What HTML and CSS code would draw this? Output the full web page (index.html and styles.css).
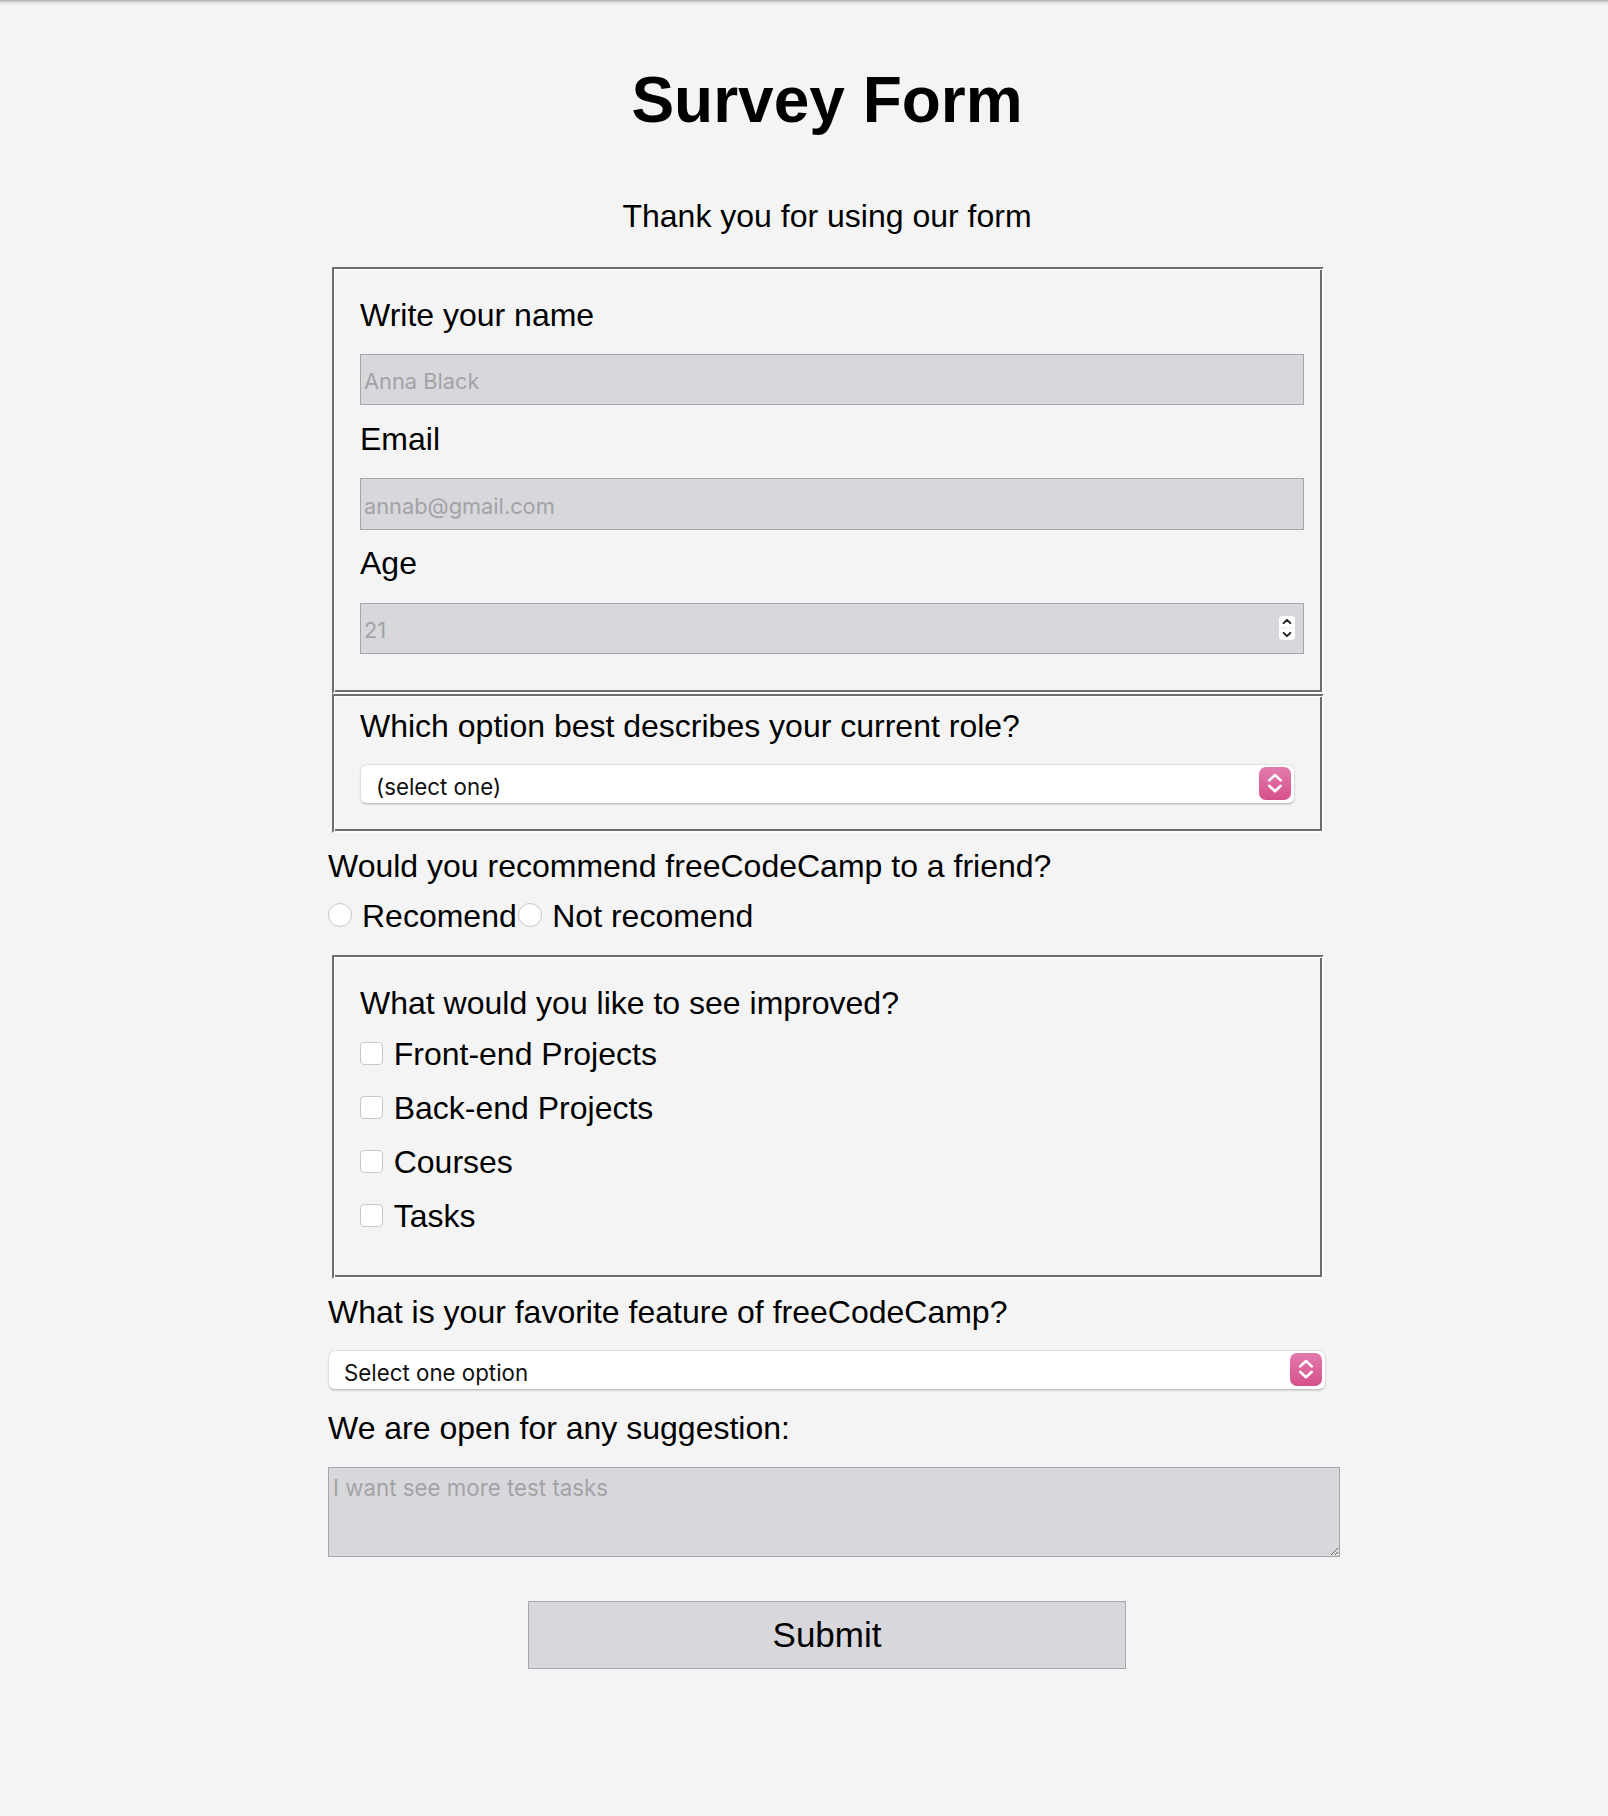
FILE: index.html
```html
<!DOCTYPE html>
<html lang="en">
<head>
<meta charset="utf-8">
<title>Survey Form</title>
<link rel="stylesheet" href="styles.css">
</head>
<body>
<main class="page">
  <h1 class="title" id="title">Survey Form</h1>
  <p class="subtitle" id="description">Thank you for using our form</p>
  <form class="survey" id="survey-form">
    <fieldset class="box box-personal">
      <label class="lbl" for="name" id="name-label">Write your name</label>
      <input class="field" id="name" type="text" placeholder="Anna Black">
      <label class="lbl lbl-next" for="email" id="email-label">Email</label>
      <input class="field" id="email" type="email" placeholder="annab@gmail.com">
      <label class="lbl lbl-next" for="number" id="number-label">Age</label>
      <div class="num-wrap">
        <input class="field field-num" id="number" type="number" placeholder="21">
        <svg class="spinner" viewBox="0 0 18 26" width="18" height="26" aria-hidden="true">
          <rect x="0.4" y="0.4" width="17.2" height="25.2" rx="4" fill="#ffffff" stroke="#cfcfd2" stroke-width="0.8"/>
          <line x1="1.5" y1="13" x2="16.5" y2="13" stroke="#e1e1e4" stroke-width="0.8"/>
          <path d="M5.6 8.2 L9 4.8 L12.4 8.2" fill="none" stroke="#1e1e1e" stroke-width="1.9" stroke-linecap="round" stroke-linejoin="round"/>
          <path d="M5.6 17.8 L9 21.2 L12.4 17.8" fill="none" stroke="#1e1e1e" stroke-width="1.9" stroke-linecap="round" stroke-linejoin="round"/>
        </svg>
      </div>
    </fieldset>
    <fieldset class="box box-role">
      <label class="lbl" for="dropdown">Which option best describes your current role?</label>
      <div class="select-wrap select-role">
        <select class="select" id="dropdown">
          <option>(select one)</option>
          <option>Student</option>
          <option>Full Time Job</option>
          <option>Other</option>
        </select>
        <span class="select-arrow" aria-hidden="true">
          <svg viewBox="0 0 32 32" width="32" height="32">
            <path d="M10.2 13.4 L16 8 L21.8 13.4" fill="none" stroke="#ffffff" stroke-width="2.6" stroke-linecap="round" stroke-linejoin="round"/>
            <path d="M10.2 18.8 L16 24.2 L21.8 18.8" fill="none" stroke="#ffffff" stroke-width="2.6" stroke-linecap="round" stroke-linejoin="round"/>
          </svg>
        </span>
      </div>
    </fieldset>
    <p class="q q-recommend">Would you recommend freeCodeCamp to a friend?</p>
    <div class="radio-row">
      <label class="choice"><input class="radio" type="radio" name="recommend" value="yes"><span>Recomend</span></label>
      <label class="choice"><input class="radio radio-second" type="radio" name="recommend" value="no"><span>Not recomend</span></label>
    </div>
    <fieldset class="box box-improve">
      <p class="q">What would you like to see improved?</p>
      <label class="check-row check-first"><input class="check" type="checkbox" value="front-end"><span>Front-end Projects</span></label>
      <label class="check-row"><input class="check" type="checkbox" value="back-end"><span>Back-end Projects</span></label>
      <label class="check-row"><input class="check" type="checkbox" value="courses"><span>Courses</span></label>
      <label class="check-row"><input class="check" type="checkbox" value="tasks"><span>Tasks</span></label>
    </fieldset>
    <p class="q q-fav">What is your favorite feature of freeCodeCamp?</p>
    <div class="select-wrap select-fav">
      <select class="select" id="feature">
        <option>Select one option</option>
        <option>Challenges</option>
        <option>Projects</option>
        <option>Community</option>
      </select>
      <span class="select-arrow" aria-hidden="true">
        <svg viewBox="0 0 32 32" width="32" height="32">
          <path d="M10.2 13.4 L16 8 L21.8 13.4" fill="none" stroke="#ffffff" stroke-width="2.6" stroke-linecap="round" stroke-linejoin="round"/>
          <path d="M10.2 18.8 L16 24.2 L21.8 18.8" fill="none" stroke="#ffffff" stroke-width="2.6" stroke-linecap="round" stroke-linejoin="round"/>
        </svg>
      </span>
    </div>
    <p class="q q-suggest">We are open for any suggestion:</p>
    <textarea class="suggest" placeholder="I want see more test tasks"></textarea>
    <button class="submit" type="submit" id="submit">Submit</button>
  </form>
</main>
</body>
</html>
```

FILE: styles.css
```css
html {
  background: #f4f4f4 linear-gradient(#a6a6a6 0, #d9d9d9 2px, #f4f4f4 5px) no-repeat;
  background-size: 100% 6px;
}

body {
  margin: 0;
  font-family: "Liberation Sans", Arial, Helvetica, sans-serif;
  color: #000;
}

.page {
  width: 998px;
  margin-left: 328px;
  padding-top: 63px;
  padding-bottom: 120px;
}

.title {
  margin: 0;
  font-size: 64px;
  line-height: 74px;
  font-weight: 700;
  text-align: center;
}

.subtitle {
  margin: 60.7px 0 0;
  font-size: 32px;
  line-height: 36px;
  text-align: center;
}

.survey {
  margin: 33.3px 0 0;
  font-size: 32px;
  line-height: 36px;
}

/* fieldsets with a groove-like border */
.box {
  box-sizing: border-box;
  width: 992px;
  min-width: 0;
  margin: 0 0 0 4px;
  padding: 0 25px 0 26px;
  border: 2px solid;
  border-color: #6d6d6d #fbfbfb #fbfbfb #6d6d6d;
  box-shadow: inset 1px 1px 0 #fdfdfd, inset -2px -2px 0 #6d6d6d;
}

.box-personal {
  padding-top: 27.75px;
  padding-bottom: 38px;
}

.box-role {
  padding-top: 12px;
  padding-bottom: 27px;
}

.box-improve {
  margin-top: 20.65px;
  padding-top: 28px;
  padding-bottom: 43px;
}

.lbl {
  display: block;
  line-height: 36px;
}

.lbl-next {
  margin-top: 15.6px;
}

.field {
  display: block;
  box-sizing: border-box;
  width: 944px;
  height: 51.4px;
  margin: 21.3px 0 0;
  padding: 3px 3px 0;
  border: 1px solid #a5a4a9;
  border-radius: 0;
  background: #d8d7dc;
  font-family: Inter, "Noto Sans", sans-serif;
  font-size: 21.8px;
  color: #333;
  outline: none;
}

.field::placeholder,
.suggest::placeholder {
  color: #a3a3a7;
}

.num-wrap {
  position: relative;
  width: 944px;
  margin-top: 21.3px;
}

.num-wrap .field {
  margin-top: 0;
}

.field-num {
  -moz-appearance: textfield;
}

.field-num::-webkit-inner-spin-button,
.field-num::-webkit-outer-spin-button {
  -webkit-appearance: none;
  margin: 0;
}

.spinner {
  position: absolute;
  right: 8px;
  top: 12.5px;
  display: block;
}

/* selects */
.select-wrap {
  position: relative;
  height: 40px;
}

.select-role {
  width: 935px;
  margin-top: 20px;
}

.select-fav {
  width: 998px;
  margin-top: 20.25px;
}

.select {
  -webkit-appearance: none;
  appearance: none;
  display: block;
  box-sizing: border-box;
  width: 100%;
  height: 40px;
  margin: 0;
  padding: 5px 0 0 15px;
  border: 1px solid #e0e0e0;
  border-bottom-color: #c4c4c4;
  border-radius: 7px;
  background: #fff;
  box-shadow: 0 1px 1.5px rgba(0, 0, 0, 0.12);
  font-family: Inter, "Noto Sans", sans-serif;
  font-size: 22.3px;
  color: #111;
  outline: none;
}

.select-arrow {
  position: absolute;
  right: 4px;
  top: 3.5px;
  width: 32px;
  height: 32.5px;
  border-radius: 7px;
  background: linear-gradient(#e27bae, #d6508b);
  pointer-events: none;
}

.select-arrow svg {
  display: block;
}

/* questions */
.q {
  margin: 0;
  line-height: 36px;
}

.q-recommend {
  margin-top: 14.75px;
}

.q-fav {
  margin-top: 14.75px;
}

.q-suggest {
  margin-top: 20.3px;
}

/* radios */
.radio-row {
  display: flex;
  align-items: center;
  height: 36px;
  margin-top: 14.6px;
}

.choice {
  display: flex;
  align-items: center;
}

.radio {
  -webkit-appearance: none;
  appearance: none;
  box-sizing: border-box;
  width: 24px;
  height: 24px;
  margin: -3px 10px 0 0;
  border: 1px solid #c6c6c6;
  border-radius: 50%;
  background: #fff;
}

.radio-second {
  margin-left: 1.5px;
}

/* checkboxes */
.check-row {
  display: flex;
  align-items: center;
  height: 36px;
  margin-top: 18px;
}

.check-first {
  margin-top: 15px;
}

.check {
  -webkit-appearance: none;
  appearance: none;
  box-sizing: border-box;
  width: 23px;
  height: 23px;
  margin: 0 10.7px 0 0;
  border: 1px solid #c8c8c8;
  border-radius: 4px;
  background: #fff;
}

/* textarea */
.suggest {
  display: block;
  box-sizing: border-box;
  width: 1012px;
  height: 89.2px;
  margin: 21.2px 0 0;
  padding: 6px 4px 3px;
  border: 1px solid #a5a4a9;
  border-radius: 0;
  background: #d8d7dc;
  font-family: Inter, "Noto Sans", sans-serif;
  font-size: 22.3px;
  color: #333;
  outline: none;
}

/* button */
.submit {
  display: block;
  box-sizing: border-box;
  width: 598px;
  height: 68.6px;
  margin: 44px auto 0;
  padding: 0;
  border: 1px solid #a7a7ab;
  border-radius: 0;
  background: #d8d7dc;
  font-family: "Liberation Sans", Arial, Helvetica, sans-serif;
  font-size: 35px;
  color: #000;
}
```
